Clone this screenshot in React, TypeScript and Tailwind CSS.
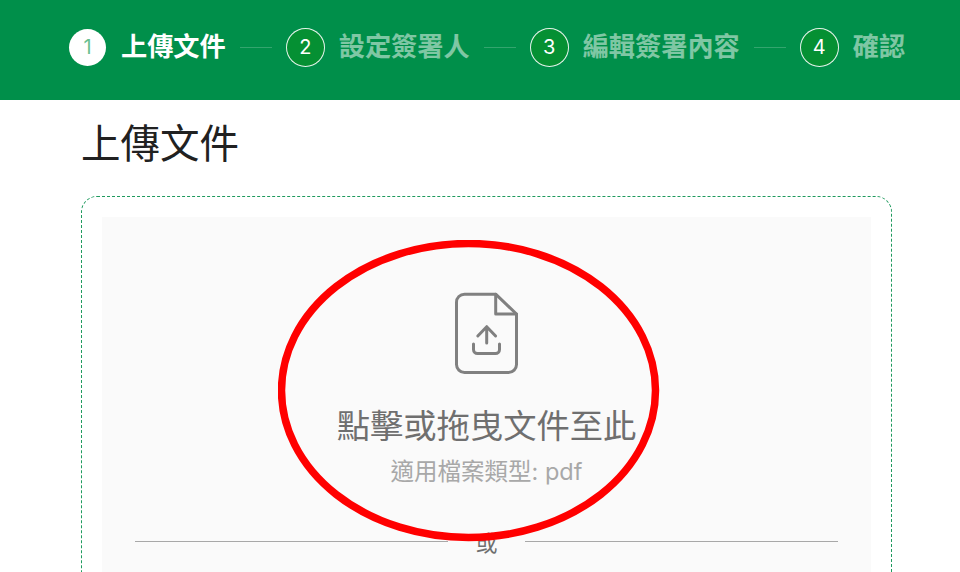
const font = { fontFamily: '"Inter", "Noto Sans CJK TC", sans-serif' };

const steps = [
  { n: 1, label: '上傳文件' },
  { n: 2, label: '設定簽署人' },
  { n: 3, label: '編輯簽署內容' },
  { n: 4, label: '確認' },
];

function FileUploadIcon() {
  return (
    <svg width="64" height="84" viewBox="0 0 64 84" fill="none" stroke="#808080" strokeWidth="3" strokeLinecap="round" strokeLinejoin="round">
      <path d="M40.700 2.200H9.500a8 8 0 0 0-8 8v62.300a8 8 0 0 0 8 8h44a8 8 0 0 0 8-8V22L40.700 2.200Z" />
      <path d="M40.700 2.200V22h20.800" />
      <path d="M31.700 51V35M22.800 44l8.900-9.300L40.600 44" />
      <path d="M18.500 52v5.500a4 4 0 0 0 4 4h18a4 4 0 0 0 4-4V52" />
    </svg>
  );
}

export default function App() {
  return (
    <div className="relative h-[572px] w-[960px] overflow-hidden bg-white" style={font}>
      {/* Steps header */}
      <div className="flex h-[100px] items-center bg-[#008f4a] pb-[6px] pl-[69px]">
        {steps.map((step, index) => (
          <div key={step.n} className="flex items-center">
            {index > 0 && <div className="mx-[14px] h-px w-[32px] bg-white/20" />}
            {index === 0 ? (
              <div className="flex h-[37px] w-[37px] items-center justify-center rounded-full bg-white text-[20px] text-[#6abf90]">
                {step.n}
              </div>
            ) : (
              <div className="flex h-[39px] w-[39px] items-center justify-center rounded-full border border-white/90 bg-[#059033] text-[20px] text-white">
                {step.n}
              </div>
            )}
            <div className={index === 0 ? 'ml-[15px] text-[26.200px] leading-[36px] font-bold text-white' : 'ml-[14px] text-[26.200px] leading-[36px] font-bold text-white/50'}>
              {step.label}
            </div>
          </div>
        ))}
      </div>

      <div className="pl-[81px] pr-[68px]">
        <h1 className="mt-[20px] text-[39.500px] leading-[48px] font-normal text-[#212121]">上傳文件</h1>

        {/* Drop zone */}
        <div className="mt-[28px] rounded-[16px] border border-dashed border-[#1f9a5e] p-[20px]">
          <div className="flex h-[400px] flex-col items-center bg-[#fafafa] px-[33px] pt-[75px]">
            <div className="h-[84px]">
              <FileUploadIcon />
            </div>
            <div className="mt-[27px] text-[33.300px] leading-[46px] text-[#6f6f6f]">點擊或拖曳文件至此</div>
            <div className="mt-[6px] text-[23.500px] leading-[34px] text-[#a8a8a8]">適用檔案類型: pdf</div>
            <div className="mt-[38px] flex w-full items-center">
              <div className="h-px flex-1 bg-[#a8a8a8]" />
              <div className="relative top-[2px] w-[77px] text-center text-[22px] leading-[28px] text-[#6f6f6f]">或</div>
              <div className="h-px flex-1 bg-[#a8a8a8]" />
            </div>
          </div>
        </div>
      </div>

      {/* Red annotation circle drawn over the page */}
      <svg className="absolute left-[278px] top-[240px]" width="382" height="302" viewBox="0 0 382 302" fill="none">
        <ellipse cx="190.500" cy="150.500" rx="187" ry="147" stroke="#ff0000" strokeWidth="7.500" />
      </svg>
    </div>
  );
}
